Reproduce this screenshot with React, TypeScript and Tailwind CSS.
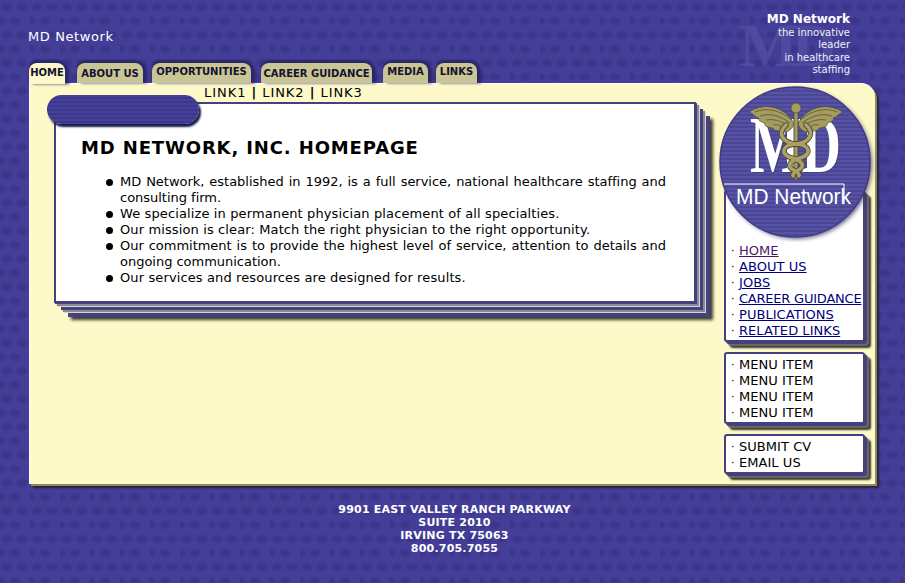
import React from 'react';

const tabs = [
  { label: 'HOME', className: 'w-[36px] pt-[4px] !bg-[#fdf9c9] !h-[21px]' },
  { label: 'ABOUT US', className: 'w-[66px] ml-[12px] pt-[5px]' },
  { label: 'OPPORTUNITIES', className: 'w-[99px] ml-[9px] pt-[3px]' },
  { label: 'CAREER GUIDANCE', className: 'w-[111px] ml-[10px] pt-[5px]' },
  { label: 'MEDIA', className: 'w-[45px] ml-[11px] pt-[3px]' },
  { label: 'LINKS', className: 'w-[41px] ml-[8px] pt-[3px]' },
];

const mainLinks = [
  { label: 'HOME', className: 'underline text-[#4b1668]' },
  { label: 'ABOUT US', className: 'underline text-[#00007f]' },
  { label: 'JOBS', className: 'underline text-[#00007f]' },
  { label: 'CAREER GUIDANCE', className: 'underline text-[#00007f] tracking-[-0.22px]' },
  { label: 'PUBLICATIONS', className: 'underline text-[#00007f]' },
  { label: 'RELATED LINKS', className: 'underline text-[#00007f]' },
];

const bullets = [
  { text: 'MD Network, established in 1992, is a full service, national healthcare staffing and consulting firm.', className: 'tracking-[-0.02px]' },
  { text: 'We specialize in permanent physician placement of all specialties.', className: 'tracking-[0.12px]' },
  { text: 'Our mission is clear: Match the right physician to the right opportunity.', className: 'tracking-[0.12px]' },
  { text: 'Our commitment is to provide the highest level of service, attention to details and ongoing communication.', className: 'tracking-[-0.02px]' },
  { text: 'Our services and resources are designed for results.', className: 'tracking-[0.12px]' },
];

function Wing() {
  return (
    <g>
      <path d="M794 124 C788 110 768 100 749 112 C754 114 755 117 759 118 C757 120 761 122 765 123 C763 126 769 128 773 128 C773 131 778 131 781 131 C786 134 792 130 794 124 Z" fill="#a59c5f" stroke="#4d4a3c" strokeWidth="0.7" />
      <path d="M792 120 C780 110 766 107 755 112 M790 123 C779 115 769 113 760 116 M788 126 C780 120 773 119 766 120 M785 129 C780 125 777 124 773 125" stroke="#5e5a3a" strokeWidth="0.9" fill="none" />
    </g>
  );
}

const snakeA = 'M786 125 C776 134 784 143 796 144 C810 145 811 153 803 157 C794 160 788 162 790 167 C792 171 800 171 799 176';
const snakeB = 'M806 125 C816 134 808 143 796 144 C782 145 781 153 789 157 C798 160 804 162 802 167 C800 171 792 171 793 176';

function Logo() {
  return (
    <svg viewBox="717 84 158 158" className="relative z-10 block h-[158px] w-[158px]">
      <defs>
        <pattern id="stripes" width="4" height="4" patternUnits="userSpaceOnUse">
          <rect width="4" height="4" fill="#4b4697" />
          <rect width="4" height="2" fill="#5753a3" />
        </pattern>
        <filter id="soft">
          <feGaussianBlur stdDeviation="2" />
        </filter>
      </defs>
      <circle cx="797" cy="164" r="75" fill="#35325a" opacity="0.75" filter="url(#soft)" />
      <circle cx="795" cy="162" r="75" fill="url(#stripes)" stroke="#3f3a86" strokeWidth="1.5" />
      <text x="750" y="172" fontFamily="'Liberation Serif', serif" fontWeight="700" fontSize="80" fill="#2f2b6a" opacity="0.45" textLength="91" lengthAdjust="spacingAndGlyphs" transform="translate(1 1)">MD</text>
      <text x="750" y="172" fontFamily="'Liberation Serif', serif" fontWeight="700" fontSize="80" fill="#ffffff" textLength="91" lengthAdjust="spacingAndGlyphs">MD</text>

      <Wing />
      <g transform="translate(1592 0) scale(-1 1)">
        <Wing />
      </g>
      <path d="M796 110 L796 176" stroke="#4d4a3c" strokeWidth="5" />
      <path d="M796 110 L796 176" stroke="#a59c5f" strokeWidth="3.2" />
      <circle cx="796" cy="108" r="5" fill="#a59c5f" stroke="#4d4a3c" strokeWidth="0.7" />
      <path d="M796 181 L790 170 L802 170 Z" fill="#8f8750" stroke="#4d4a3c" strokeWidth="0.6" />
      <g fill="none" strokeLinecap="round">
        <path d={snakeA} stroke="#4d4a3c" strokeWidth="5.4" />
        <path d={snakeB} stroke="#4d4a3c" strokeWidth="5.4" />
        <path d={snakeA} stroke="#aaa164" strokeWidth="3.6" />
        <path d={snakeB} stroke="#aaa164" strokeWidth="3.6" />
      </g>

      <path d="M724 184 H844 V204" stroke="#ffffff" strokeWidth="1" fill="none" />
      <text x="736" y="204" fontFamily="'Liberation Sans', sans-serif" fontSize="22" fill="#ffffff" textLength="115" lengthAdjust="spacingAndGlyphs">MD Network</text>
    </svg>
  );
}

function MenuBox({ items, className }: { items: { label: string; className?: string }[]; className?: string }) {
  return (
    <div className={`w-[141px] rounded-[3px] border-2 border-[#45407e] bg-white pl-[5px] shadow-[2px_2px_0_#45407e,4px_4px_1px_#6b6a60,6px_6px_2px_#3a3834] ${className ?? ''}`}>
      {items.map((item, i) => (
        <div key={i} className="flex h-[16px] items-center whitespace-nowrap text-[13px] leading-[16px] tracking-[0.05px] text-black">
          <span className="w-[8px] shrink-0 text-[11px]">·</span>
          <span className={item.className}>{item.label}</span>
        </div>
      ))}
    </div>
  );
}

export default function App() {
  return (
    <div className="h-[583px] w-[905px] overflow-hidden bg-[#443e98] bg-[radial-gradient(ellipse_7px_5px_at_7px_7px,#3c368b_50%,transparent_100%),radial-gradient(ellipse_7px_5px_at_22px_7px,#3c368b_50%,transparent_100%),radial-gradient(ellipse_7px_5px_at_0px_21px,#3c368b_50%,transparent_100%),radial-gradient(ellipse_7px_5px_at_15px_21px,#3c368b_50%,transparent_100%)] bg-[length:30px_28px] font-['DejaVu_Sans',Verdana,sans-serif]">
      <header className="flex h-[83px] w-full">
        <div className="flex w-[620px] flex-col pl-[28px]">
          <div className="pt-[29px] text-[13px] leading-[16px] tracking-[0.6px] text-white">MD Network</div>
          <nav className="mt-[18px] flex h-[20px] items-start pl-[1px]">
            {tabs.map((tab) => (
              <div
                key={tab.label}
                className={`h-[20px] shrink-0 rounded-t-[8px] bg-[#c9c595] text-center text-[10px] font-bold leading-[12px] text-[#14122e] shadow-[0_-3px_2px_#2c2768,4px_0_3px_#2c2768] ${tab.className}`}
              >
                {tab.label}
              </div>
            ))}
          </nav>
        </div>
        <div className="relative ml-[115px] w-[115px] pt-[12px] text-right">
          <span className="absolute left-[4px] top-[10px] font-['Liberation_Serif',serif] text-[62px] font-bold leading-[70px] tracking-[-6px] text-[#4f4a9e]">MD</span>
          <div className="relative text-[12px] font-bold leading-[15px] text-white">MD Network</div>
          <div className="relative text-[10px] leading-[12.3px] text-[#f0eff8]">
            <div>the innovative</div>
            <div>leader</div>
            <div>in healthcare</div>
            <div>staffing</div>
          </div>
        </div>
      </header>

      <main className="ml-[29px] flex h-[401px] w-[846px] rounded-tr-[14px] border-l border-t border-white bg-[#fdf9c9] shadow-[2px_2px_0_#8b8a60,4px_4px_2px_#25233a]">
        <section className="w-[680px] shrink-0">
          <div className="ml-[174px] h-[18px] text-[13px] leading-[18px] tracking-[0.95px] text-black">
            LINK1 <b>|</b> LINK2 <b>|</b> LINK3
          </div>
          <div className="relative ml-[24px] h-[201px] w-[642px] border-2 border-[#45407e] bg-white pl-[25px] pr-[28px] pt-[32px] shadow-[1px_1px_0_#45407e,3px_3px_1px_#8a8a90,4px_4px_0_#e4e4ee,7px_7px_0_#45407e,9px_9px_1px_#8a8a90,10px_10px_0_#e4e4ee,14px_14px_0_#45407e,17px_17px_3px_#3d3b30]">
            <div className="absolute -left-[9px] -top-[9px] h-[29px] w-[152px] rounded-full bg-[repeating-linear-gradient(180deg,#45409a_0,#45409a_2px,#3c3789_2px,#3c3789_4px)] shadow-[2px_3px_2px_#1d1a4a]" />
            <h1 className="text-[18px] font-bold leading-[24px] tracking-[0.87px] text-black">MD NETWORK, INC. HOMEPAGE</h1>
            <ul className="mt-[14px] list-none">
              {bullets.map((item, i) => (
                <li key={i} className={`relative pl-[39px] text-justify text-[13px] leading-[16px] text-black ${item.className}`}>
                  <span className="absolute left-[25px] top-[5px] h-[7px] w-[7px] rounded-full bg-black" />
                  {item.text}
                </li>
              ))}
            </ul>
          </div>
        </section>

        <aside className="ml-[7px] w-[158px] shrink-0">
          <Logo />
          <div className="ml-[7px] flex flex-col gap-[10px]">
            <MenuBox items={mainLinks} className="-mt-[52px] h-[152px] pt-[51px]" />
            <MenuBox items={[1, 2, 3, 4].map(() => ({ label: 'MENU ITEM' }))} className="h-[72px] pt-[3px]" />
            <MenuBox items={[{ label: 'SUBMIT CV' }, { label: 'EMAIL US' }]} className="h-[40px] pt-[3px]" />
          </div>
        </aside>
      </main>

      <footer className="pl-[4px] pt-[19px] text-center text-[11px] font-bold leading-[13px] tracking-[0.2px] text-white">
        <div>9901 EAST VALLEY RANCH PARKWAY</div>
        <div>SUITE 2010</div>
        <div>IRVING TX 75063</div>
        <div>800.705.7055</div>
      </footer>
    </div>
  );
}
